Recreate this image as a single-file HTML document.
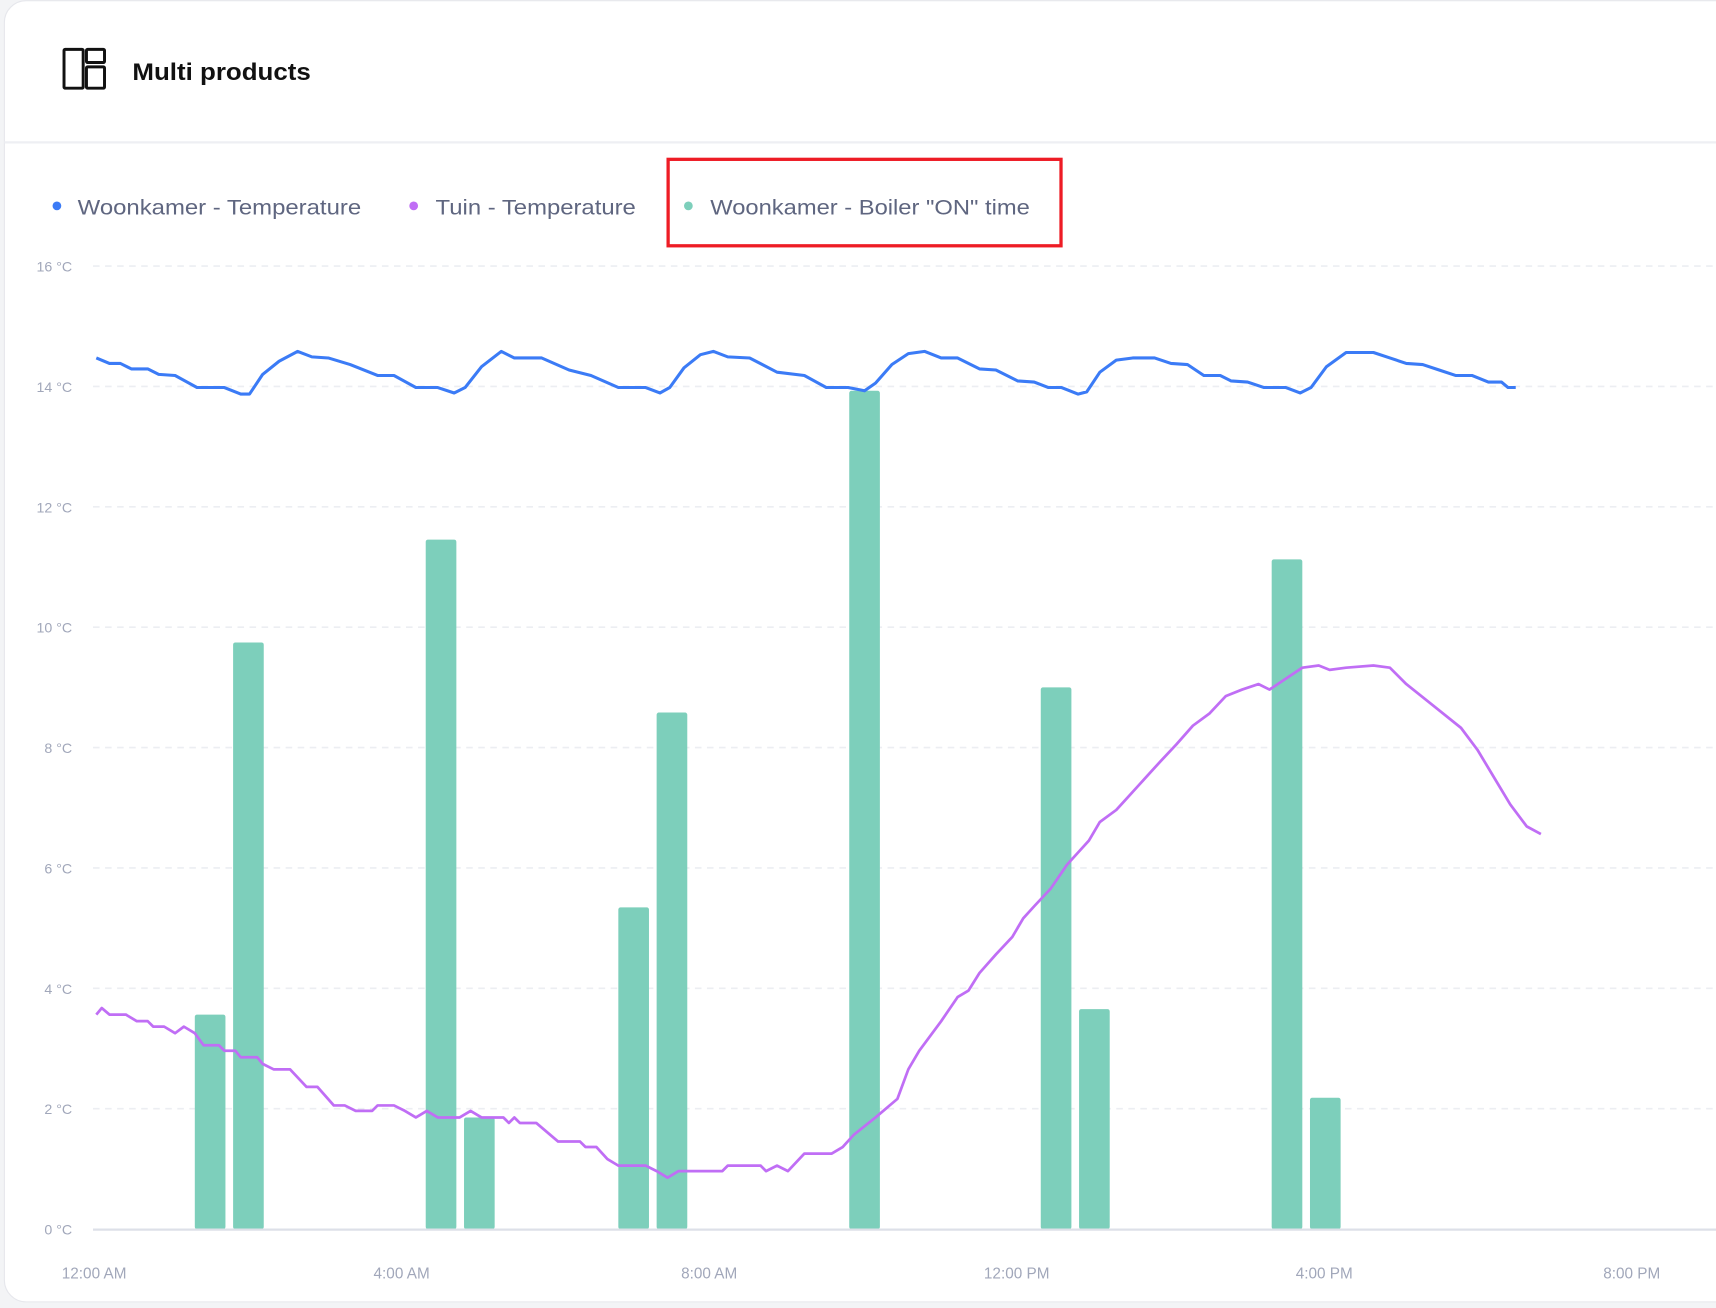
<!DOCTYPE html>
<html><head><meta charset="utf-8"><style>
html,body{margin:0;padding:0;background:#f3f4f6;width:1716px;height:1308px;overflow:hidden}
svg{display:block}
text{font-family:"Liberation Sans",sans-serif}
</style></head><body>
<svg width="1716" height="1308" viewBox="0 0 1568 1195">
<rect x="4" y="0.5" width="1600" height="1189" rx="20" fill="#fff" stroke="#e6e7ec"/>
<line x1="4" y1="130" x2="1568" y2="130" stroke="#eeeff3" stroke-width="2"/>
<g fill="none" stroke="#111" stroke-width="2.7">
<rect x="58.5" y="45" width="17.5" height="35.5" rx="1"/>
<rect x="79" y="45" width="16.5" height="12" rx="1"/>
<rect x="79" y="61" width="16.5" height="19.5" rx="1"/>
</g>
<text x="121" y="73" font-size="22" font-weight="bold" fill="#111" textLength="163" lengthAdjust="spacingAndGlyphs">Multi products</text>
<g font-size="19" fill="#5f6680">
<circle cx="52" cy="188" r="4" fill="#3b7bf6"/><text x="71" y="196" textLength="259" lengthAdjust="spacingAndGlyphs">Woonkamer - Temperature</text>
<circle cx="378" cy="188" r="4" fill="#c06ef5"/><text x="398" y="196" textLength="183" lengthAdjust="spacingAndGlyphs">Tuin - Temperature</text>
<circle cx="629" cy="188" r="4" fill="#7dcfbb"/><text x="649" y="196" textLength="292" lengthAdjust="spacingAndGlyphs">Woonkamer - Boiler "ON" time</text>
</g>
<rect x="610.5" y="145.5" width="359" height="79" fill="none" stroke="#ee1c25" stroke-width="3"/>
<g stroke="#eceef2" stroke-width="1.5" stroke-dasharray="6 5">
<line x1="85" y1="243" x2="1568" y2="243"/><line x1="85" y1="353" x2="1568" y2="353"/>
<line x1="85" y1="463" x2="1568" y2="463"/><line x1="85" y1="573" x2="1568" y2="573"/>
<line x1="85" y1="683" x2="1568" y2="683"/><line x1="85" y1="793" x2="1568" y2="793"/>
<line x1="85" y1="903" x2="1568" y2="903"/><line x1="85" y1="1013" x2="1568" y2="1013"/>
</g>
<g font-size="13" fill="#a1a7ba" text-anchor="end">
<text x="66" y="248">16 °C</text><text x="66" y="358">14 °C</text><text x="66" y="468">12 °C</text>
<text x="66" y="578">10 °C</text><text x="66" y="688">8 °C</text><text x="66" y="798">6 °C</text>
<text x="66" y="908">4 °C</text><text x="66" y="1018">2 °C</text><text x="66" y="1128">0 °C</text>
</g>
<g font-size="14" fill="#a1a7ba" text-anchor="middle">
<text x="86" y="1168">12:00 AM</text><text x="367" y="1168">4:00 AM</text><text x="648" y="1168">8:00 AM</text>
<text x="929" y="1168">12:00 PM</text><text x="1210" y="1168">4:00 PM</text><text x="1491" y="1168">8:00 PM</text>
</g>
<g fill="#7dcfbb">
<rect x="178" y="927" width="28" height="196" rx="2"/>
<rect x="213" y="587" width="28" height="536" rx="2"/>
<rect x="389" y="493" width="28" height="630" rx="2"/>
<rect x="424" y="1021" width="28" height="102" rx="2"/>
<rect x="565" y="829" width="28" height="294" rx="2"/>
<rect x="600" y="651" width="28" height="472" rx="2"/>
<rect x="776" y="357" width="28" height="766" rx="2"/>
<rect x="951" y="628" width="28" height="495" rx="2"/>
<rect x="986" y="922" width="28" height="201" rx="2"/>
<rect x="1162" y="511" width="28" height="612" rx="2"/>
<rect x="1197" y="1003" width="28" height="120" rx="2"/>
</g>
<line x1="85" y1="1123.5" x2="1568" y2="1123.5" stroke="#dde0e8" stroke-width="2"/>
<polyline fill="none" stroke="#3b7bf6" stroke-width="2.8" stroke-linejoin="round" points="88,327 100,332 110,332 120,337 135,337 145,342 160,343 180,354 205,354 220,360 228,360 240,342 255,330 272,321 285,326 300,327 320,333 345,343 360,343 380,354 400,354 415,359 425,354 440,335 458,321 470,327 495,327 520,338 540,343 565,354 590,354 603,359 612,354 625,336 640,324 652,321 665,326 685,327 710,340 735,343 755,354 775,354 790,357 800,350 815,333 830,323 845,321 860,327 875,327 895,337 910,338 930,348 945,349 958,354 970,354 985,360 993,358 1005,340 1020,329 1035,327 1055,327 1070,332 1085,333 1100,343 1115,343 1125,348 1140,349 1155,354 1175,354 1188,359 1198,354 1212,335 1230,322 1255,322 1270,327 1285,332 1300,333 1315,338 1330,343 1345,343 1360,349 1372,349 1378,354 1385,354"/>
<polyline fill="none" stroke="#c06ef5" stroke-width="2.5" stroke-linejoin="round" points="88,927 93,921 100,927 115,927 125,933 135,933 140,938 150,938 160,944 168,938 178,944 186,955 200,955 205,960 215,960 220,966 235,966 240,972 250,977 265,977 280,993 290,993 305,1010 315,1010 325,1015 340,1015 345,1010 360,1010 370,1015 380,1021 390,1015 400,1021 420,1021 430,1015 440,1021 460,1021 465,1026 470,1021 475,1026 490,1026 510,1043 530,1043 535,1048 545,1048 555,1059 565,1065 590,1065 600,1070 610,1076 620,1070 630,1070 660,1070 665,1065 695,1065 700,1070 710,1065 720,1070 735,1054 760,1054 770,1048 780,1037 800,1021 820,1004 830,977 840,960 860,933 875,911 885,905 895,889 910,872 925,856 935,839 945,828 960,812 975,790 985,779 995,768 1005,751 1020,740 1030,729 1040,718 1050,707 1060,696 1075,680 1090,663 1105,652 1120,636 1135,630 1150,625 1160,630 1175,620 1190,610 1205,608 1215,612 1230,610 1255,608 1270,610 1285,625 1310,645 1335,665 1350,685 1365,710 1380,735 1395,755 1408,762"/>
</svg>
</body></html>
